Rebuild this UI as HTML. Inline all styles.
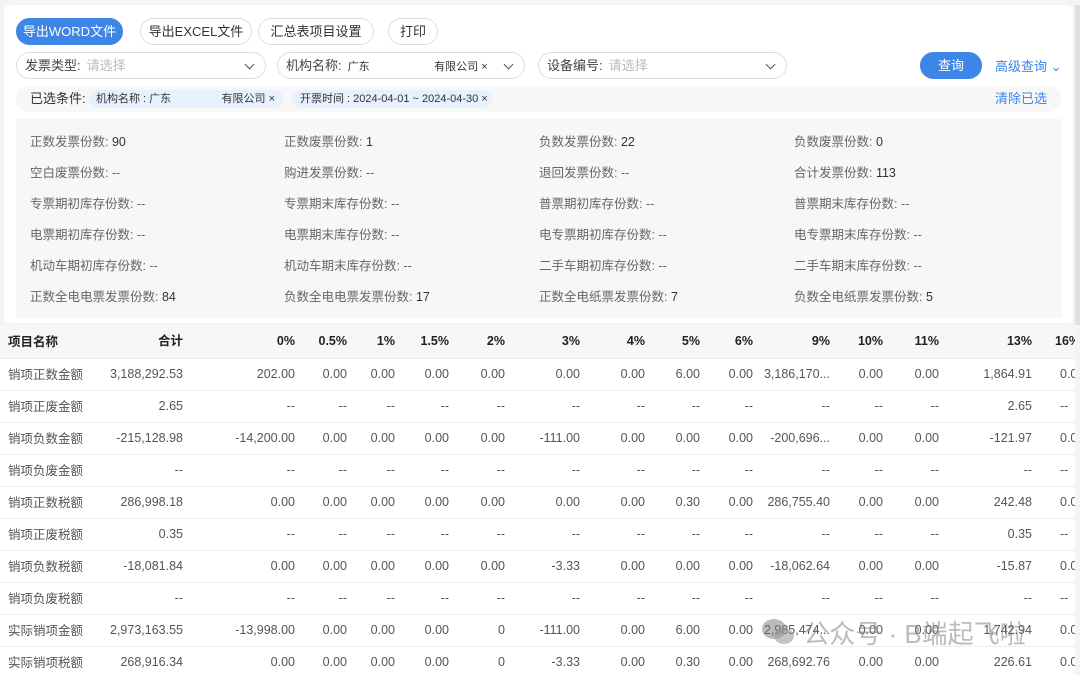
<!DOCTYPE html>
<html><head><meta charset="utf-8"><style>
*{margin:0;padding:0;box-sizing:border-box}
body{width:1080px;height:675px;overflow:hidden;background:#f4f4f4;font-family:"Liberation Sans","Noto Sans CJK SC",sans-serif;position:relative;color:#333}
.card{position:absolute;left:4px;top:5px;width:1069px;height:318px;background:#fff;border-radius:6px}
.btn{position:absolute;top:18px;height:27px;border:1px solid #ddd;border-radius:14px;font-size:13px;line-height:25px;text-align:center;color:#333;background:#fff}
.btn.p{background:#3d85e6;color:#fff;border-color:#3d85e6}
.sel{position:absolute;top:52px;height:27px;border:1px solid #ddd;border-radius:14px;font-size:13px;line-height:25px;padding-left:8px;color:#444;background:#fff}
.sel .ph{color:#bbb;margin-left:6px}
.chev{position:absolute;right:12px;top:8px;width:7px;height:7px;border-right:1.5px solid #555;border-bottom:1.5px solid #555;transform:rotate(45deg)}
.bar{position:absolute;left:16px;top:86px;width:1045px;height:26px;background:#f7f7f7;border-radius:13px;font-size:13px;line-height:26px}
.tag{position:absolute;top:4px;height:18px;background:#e6f1fd;border-radius:9px;font-size:11px;line-height:18px;color:#333}
.stats{position:absolute;left:16px;top:119px;width:1046px;height:199px;background:#f7f7f7}
.st{position:absolute;font-size:12.5px;color:#666}
.st b{font-weight:normal;color:#333}
.tw{position:absolute;left:0;top:326px;width:1075px;height:349px;overflow:hidden;background:#fff}
table{border-collapse:collapse;table-layout:fixed;width:1093px}
td,th{height:32px;line-height:31px;vertical-align:middle;text-align:right;padding:0 8px 0 0;font-size:12.5px;white-space:nowrap;overflow:hidden;border-bottom:1px solid #eee;color:#555;font-weight:normal}
th{background:#f7f7f7;color:#222;font-weight:bold}
td:first-child,th:first-child{text-align:left;padding-left:8px}
td:last-child{text-align:left;padding-left:20px}
th:last-child{text-align:left;padding-left:15px}
td:first-child span,th:first-child span{position:relative;top:1px}
.sb{position:absolute;left:1075px;top:5px;width:5px;height:320px;background:#e0e0e0}
.wm{position:absolute;left:760px;top:614px;font-size:26px;color:rgba(120,120,120,.5);white-space:nowrap}
</style></head><body>
<div class="card"></div>
<div class="sb"></div>
<div class="btn p" style="left:16px;width:107px">导出WORD文件</div>
<div class="btn" style="left:140px;width:112px">导出EXCEL文件</div>
<div class="btn" style="left:258px;width:116px">汇总表项目设置</div>
<div class="btn" style="left:388px;width:50px">打印</div>
<div class="sel" style="left:16px;width:250px">发票类型:<span class="ph">请选择</span><i class="chev"></i></div>
<div class="sel" style="left:277px;width:248px">机构名称:<span style="display:inline-block;margin-left:6px;width:140px;font-size:11px;color:#333">广东<span style="float:right;margin-right:0">有限公司 ×</span></span><i class="chev"></i></div>
<div class="sel" style="left:538px;width:249px">设备编号:<span class="ph">请选择</span><i class="chev"></i></div>
<div class="btn p" style="left:920px;top:52px;width:62px">查询</div>
<div style="position:absolute;left:995px;top:56px;font-size:13px;color:#3d85e6">高级查询 ⌄</div>
<div class="bar"><span style="margin-left:14px">已选条件:</span>
<div class="tag" style="left:73px;width:194px;padding-left:7px">机构名称 : 广东<span style="position:absolute;right:8px">有限公司 ×</span></div>
<div class="tag" style="left:276px;width:200px;padding-left:8px">开票时间 : 2024-04-01 ~ 2024-04-30 ×</div>
<span style="position:absolute;left:979px;color:#3d85e6">清除已选</span></div>
<div class="stats"></div>
<div class="st" style="left:30px;top:131px">正数发票份数: <b>90</b></div>
<div class="st" style="left:284px;top:131px">正数废票份数: <b>1</b></div>
<div class="st" style="left:539px;top:131px">负数发票份数: <b>22</b></div>
<div class="st" style="left:794px;top:131px">负数废票份数: <b>0</b></div>
<div class="st" style="left:30px;top:162px">空白废票份数: --</div>
<div class="st" style="left:284px;top:162px">购进发票份数: --</div>
<div class="st" style="left:539px;top:162px">退回发票份数: --</div>
<div class="st" style="left:794px;top:162px">合计发票份数: <b>113</b></div>
<div class="st" style="left:30px;top:193px">专票期初库存份数: --</div>
<div class="st" style="left:284px;top:193px">专票期末库存份数: --</div>
<div class="st" style="left:539px;top:193px">普票期初库存份数: --</div>
<div class="st" style="left:794px;top:193px">普票期末库存份数: --</div>
<div class="st" style="left:30px;top:224px">电票期初库存份数: --</div>
<div class="st" style="left:284px;top:224px">电票期末库存份数: --</div>
<div class="st" style="left:539px;top:224px">电专票期初库存份数: --</div>
<div class="st" style="left:794px;top:224px">电专票期末库存份数: --</div>
<div class="st" style="left:30px;top:255px">机动车期初库存份数: --</div>
<div class="st" style="left:284px;top:255px">机动车期末库存份数: --</div>
<div class="st" style="left:539px;top:255px">二手车期初库存份数: --</div>
<div class="st" style="left:794px;top:255px">二手车期末库存份数: --</div>
<div class="st" style="left:30px;top:286px">正数全电电票发票份数: <b>84</b></div>
<div class="st" style="left:284px;top:286px">负数全电电票发票份数: <b>17</b></div>
<div class="st" style="left:539px;top:286px">正数全电纸票发票份数: <b>7</b></div>
<div class="st" style="left:794px;top:286px">负数全电纸票发票份数: <b>5</b></div>
<div class="tw"><table>
<colgroup><col style="width:98px"><col style="width:93px"><col style="width:112px"><col style="width:52px"><col style="width:48px"><col style="width:54px"><col style="width:56px"><col style="width:75px"><col style="width:65px"><col style="width:55px"><col style="width:53px"><col style="width:77px"><col style="width:53px"><col style="width:56px"><col style="width:93px"><col style="width:53px"></colgroup>
<tr><th><span>项目名称</span></th><th>合计</th><th>0%</th><th>0.5%</th><th>1%</th><th>1.5%</th><th>2%</th><th>3%</th><th>4%</th><th>5%</th><th>6%</th><th>9%</th><th>10%</th><th>11%</th><th>13%</th><th>16%</th></tr>
<tr><td><span>销项正数金额</span></td><td>3,188,292.53</td><td>202.00</td><td>0.00</td><td>0.00</td><td>0.00</td><td>0.00</td><td>0.00</td><td>0.00</td><td>6.00</td><td>0.00</td><td>3,186,170...</td><td>0.00</td><td>0.00</td><td>1,864.91</td><td>0.00</td></tr>
<tr><td><span>销项正废金额</span></td><td>2.65</td><td>--</td><td>--</td><td>--</td><td>--</td><td>--</td><td>--</td><td>--</td><td>--</td><td>--</td><td>--</td><td>--</td><td>--</td><td>2.65</td><td>--</td></tr>
<tr><td><span>销项负数金额</span></td><td>-215,128.98</td><td>-14,200.00</td><td>0.00</td><td>0.00</td><td>0.00</td><td>0.00</td><td>-111.00</td><td>0.00</td><td>0.00</td><td>0.00</td><td>-200,696...</td><td>0.00</td><td>0.00</td><td>-121.97</td><td>0.00</td></tr>
<tr><td><span>销项负废金额</span></td><td>--</td><td>--</td><td>--</td><td>--</td><td>--</td><td>--</td><td>--</td><td>--</td><td>--</td><td>--</td><td>--</td><td>--</td><td>--</td><td>--</td><td>--</td></tr>
<tr><td><span>销项正数税额</span></td><td>286,998.18</td><td>0.00</td><td>0.00</td><td>0.00</td><td>0.00</td><td>0.00</td><td>0.00</td><td>0.00</td><td>0.30</td><td>0.00</td><td>286,755.40</td><td>0.00</td><td>0.00</td><td>242.48</td><td>0.00</td></tr>
<tr><td><span>销项正废税额</span></td><td>0.35</td><td>--</td><td>--</td><td>--</td><td>--</td><td>--</td><td>--</td><td>--</td><td>--</td><td>--</td><td>--</td><td>--</td><td>--</td><td>0.35</td><td>--</td></tr>
<tr><td><span>销项负数税额</span></td><td>-18,081.84</td><td>0.00</td><td>0.00</td><td>0.00</td><td>0.00</td><td>0.00</td><td>-3.33</td><td>0.00</td><td>0.00</td><td>0.00</td><td>-18,062.64</td><td>0.00</td><td>0.00</td><td>-15.87</td><td>0.00</td></tr>
<tr><td><span>销项负废税额</span></td><td>--</td><td>--</td><td>--</td><td>--</td><td>--</td><td>--</td><td>--</td><td>--</td><td>--</td><td>--</td><td>--</td><td>--</td><td>--</td><td>--</td><td>--</td></tr>
<tr><td><span>实际销项金额</span></td><td>2,973,163.55</td><td>-13,998.00</td><td>0.00</td><td>0.00</td><td>0.00</td><td>0</td><td>-111.00</td><td>0.00</td><td>6.00</td><td>0.00</td><td>2,985,474...</td><td>0.00</td><td>0.00</td><td>1,742.94</td><td>0.00</td></tr>
<tr><td><span>实际销项税额</span></td><td>268,916.34</td><td>0.00</td><td>0.00</td><td>0.00</td><td>0.00</td><td>0</td><td>-3.33</td><td>0.00</td><td>0.30</td><td>0.00</td><td>268,692.76</td><td>0.00</td><td>0.00</td><td>226.61</td><td>0.00</td></tr>
</table></div>
<div class="wm"><svg width="36" height="30" viewBox="0 0 36 30" style="vertical-align:-4px"><ellipse cx="14" cy="12" rx="12" ry="10" fill="rgba(120,120,120,.5)"/><ellipse cx="24" cy="19" rx="10" ry="8" fill="rgba(150,150,150,.55)"/></svg> 公众号 · B端起飞啦</div>
</body></html>
